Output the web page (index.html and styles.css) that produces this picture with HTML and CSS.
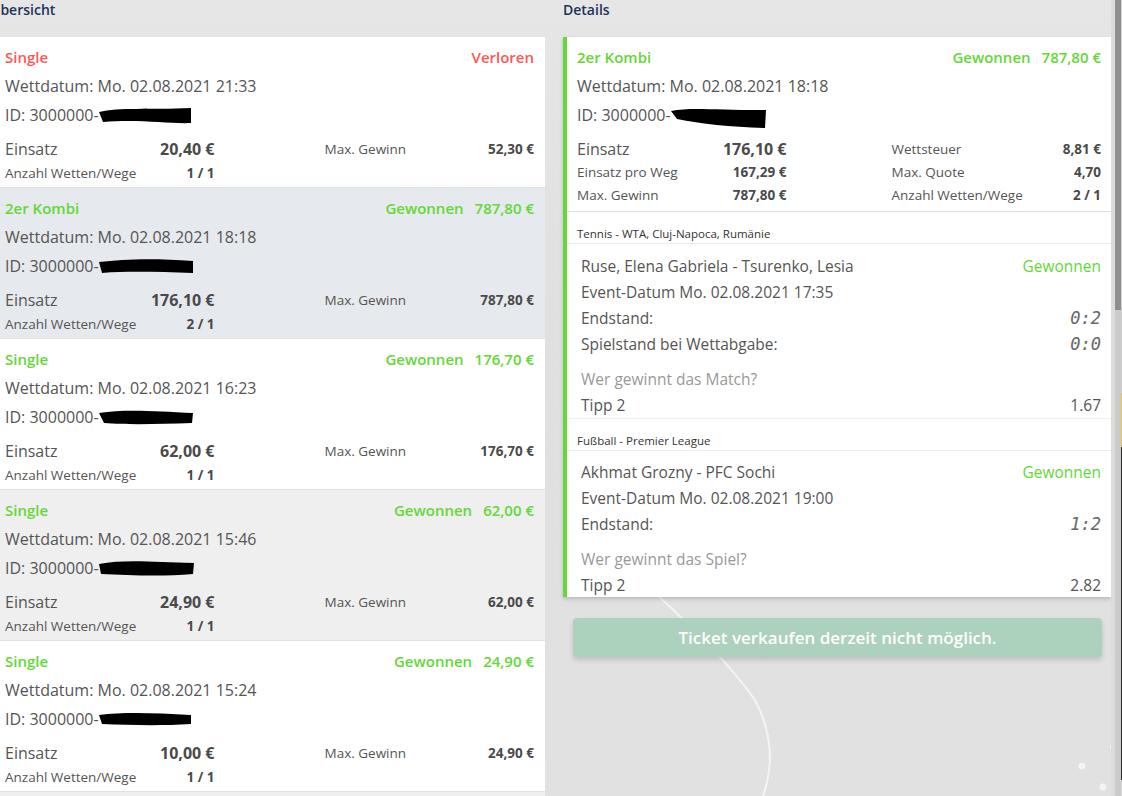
FILE: index.html
```html
<!DOCTYPE html>
<html lang="de">
<head>
<meta charset="utf-8">
<title>Wettübersicht</title>
<link rel="stylesheet" href="styles.css">
</head>
<body>
<div class="page">
  <svg class="deco" width="1122" height="796" viewBox="0 0 1122 796">
    <path d="M 636 576 Q 720 650 755 700 Q 780 748 763 796" fill="none" stroke="#f4f4f4" stroke-width="2"/>
    <circle cx="1082" cy="766" r="3.5" fill="#f4f4f4"/>
    <circle cx="1103" cy="787" r="3.5" fill="#f4f4f4"/>
    <circle cx="1113" cy="747" r="3" fill="#f4f4f4"/>
  </svg>

  <section class="col col-left">
    <h2 class="col-title col-title-left">Übersicht</h2>
    <div class="bet-list">
      <article class="bet">
        <div class="bet-head lost"><span>Single</span><span>Verloren</span></div>
        <div class="bet-line">Wettdatum: Mo. 02.08.2021 21:33</div>
        <div class="bet-line">ID: 3000000-<svg class="redact" width="95" height="20" viewBox="0 0 95 20"><path d="M0 7 C 20 2, 50 5, 92 3 L 92 18 C 70 19, 40 14, 4 17 Z" fill="#000"/></svg></div>
        <div class="stats">
          <div class="stat big"><span>Einsatz</span><b>20,40 €</b></div>
          <div class="stat"><span>Max. Gewinn</span><b>52,30 €</b></div>
          <div class="stat"><span>Anzahl Wetten/Wege</span><b>1 / 1</b></div>
        </div>
      </article>
      <article class="bet bet-selected">
        <div class="bet-head won"><span>2er Kombi</span><span>Gewonnen<span class="amount">787,80 €</span></span></div>
        <div class="bet-line">Wettdatum: Mo. 02.08.2021 18:18</div>
        <div class="bet-line">ID: 3000000-<svg class="redact" width="95" height="20" viewBox="0 0 95 20"><path d="M0 6 C 25 3, 55 2, 94 5 L 94 17 C 60 16, 30 15, 3 17 Z" fill="#000"/></svg></div>
        <div class="stats">
          <div class="stat big"><span>Einsatz</span><b>176,10 €</b></div>
          <div class="stat"><span>Max. Gewinn</span><b>787,80 €</b></div>
          <div class="stat"><span>Anzahl Wetten/Wege</span><b>2 / 1</b></div>
        </div>
      </article>
      <article class="bet">
        <div class="bet-head won"><span>Single</span><span>Gewonnen<span class="amount">176,70 €</span></span></div>
        <div class="bet-line">Wettdatum: Mo. 02.08.2021 16:23</div>
        <div class="bet-line">ID: 3000000-<svg class="redact" width="95" height="20" viewBox="0 0 95 20"><path d="M0 6 C 25 2, 55 4, 94 6 L 93 16 C 60 17, 30 18, 5 16 Z" fill="#000"/></svg></div>
        <div class="stats">
          <div class="stat big"><span>Einsatz</span><b>62,00 €</b></div>
          <div class="stat"><span>Max. Gewinn</span><b>176,70 €</b></div>
          <div class="stat"><span>Anzahl Wetten/Wege</span><b>1 / 1</b></div>
        </div>
      </article>
      <article class="bet bet-hover">
        <div class="bet-head won"><span>Single</span><span>Gewonnen<span class="amount">62,00 €</span></span></div>
        <div class="bet-line">Wettdatum: Mo. 02.08.2021 15:46</div>
        <div class="bet-line">ID: 3000000-<svg class="redact" width="95" height="20" viewBox="0 0 95 20"><path d="M0 6 C 25 1, 55 4, 95 5 L 94 16 C 60 19, 30 17, 2 16 Z" fill="#000"/></svg></div>
        <div class="stats">
          <div class="stat big"><span>Einsatz</span><b>24,90 €</b></div>
          <div class="stat"><span>Max. Gewinn</span><b>62,00 €</b></div>
          <div class="stat"><span>Anzahl Wetten/Wege</span><b>1 / 1</b></div>
        </div>
      </article>
      <article class="bet">
        <div class="bet-head won"><span>Single</span><span>Gewonnen<span class="amount">24,90 €</span></span></div>
        <div class="bet-line">Wettdatum: Mo. 02.08.2021 15:24</div>
        <div class="bet-line">ID: 3000000-<svg class="redact" width="95" height="20" viewBox="0 0 95 20"><path d="M0 6 C 25 3, 55 4, 92 6 L 92 15 C 60 17, 30 16, 3 15 Z" fill="#000"/></svg></div>
        <div class="stats">
          <div class="stat big"><span>Einsatz</span><b>10,00 €</b></div>
          <div class="stat"><span>Max. Gewinn</span><b>24,90 €</b></div>
          <div class="stat"><span>Anzahl Wetten/Wege</span><b>1 / 1</b></div>
        </div>
      </article>
      <article class="bet bet-hover"></article>
    </div>
  </section>

  <section class="col col-right">
    <h2 class="col-title">Details</h2>
    <div class="detail-card">
      <div class="detail-summary">
        <div class="bet-head won"><span>2er Kombi</span><span>Gewonnen<span class="amount">787,80 €</span></span></div>
        <div class="bet-line">Wettdatum: Mo. 02.08.2021 18:18</div>
        <div class="bet-line">ID: 3000000-<svg class="redact redact-tall" width="95" height="24" viewBox="0 0 95 24"><path d="M0 5 C 20 1, 40 4, 95 4 L 94 22 C 60 21, 30 18, 6 13 Z" fill="#000"/></svg></div>
        <div class="stats stats-detail">
          <div class="stat big"><span>Einsatz</span><b>176,10 €</b></div>
          <div class="stat"><span>Wettsteuer</span><b>8,81 €</b></div>
          <div class="stat"><span>Einsatz pro Weg</span><b>167,29 €</b></div>
          <div class="stat"><span>Max. Quote</span><b>4,70</b></div>
          <div class="stat"><span>Max. Gewinn</span><b>787,80 €</b></div>
          <div class="stat"><span>Anzahl Wetten/Wege</span><b>2 / 1</b></div>
        </div>
      </div>

      <div class="league">Tennis - WTA, Cluj-Napoca, Rumänie</div>
      <div class="event">
        <div class="ev-row"><span>Ruse, Elena Gabriela - Tsurenko, Lesia</span><span class="ev-won">Gewonnen</span></div>
        <div class="ev-row"><span>Event-Datum Mo. 02.08.2021 17:35</span></div>
        <div class="ev-row"><span>Endstand:</span><span class="score">0:2</span></div>
        <div class="ev-row"><span>Spielstand bei Wettabgabe:</span><span class="score">0:0</span></div>
        <div class="ev-row ev-question"><span>Wer gewinnt das Match?</span></div>
        <div class="ev-row"><span>Tipp 2</span><span>1.67</span></div>
      </div>

      <div class="league">Fußball - Premier League</div>
      <div class="event event-last">
        <div class="ev-row"><span>Akhmat Grozny - PFC Sochi</span><span class="ev-won">Gewonnen</span></div>
        <div class="ev-row"><span>Event-Datum Mo. 02.08.2021 19:00</span></div>
        <div class="ev-row"><span>Endstand:</span><span class="score">1:2</span></div>
        <div class="ev-row ev-question"><span>Wer gewinnt das Spiel?</span></div>
        <div class="ev-row"><span>Tipp 2</span><span>2.82</span></div>
      </div>
    </div>
    <button class="sell-btn" type="button">Ticket verkaufen derzeit nicht möglich.</button>
  </section>

  <div class="scrollbar">
    <div class="sb-gap"></div>
    <div class="sb-track"><div class="sb-thumb"></div></div>
    <div class="sb-edge"><div class="edge-a"></div><div class="edge-b"></div><div class="edge-c"></div><div class="edge-d"></div></div>
  </div>
</div>
</body>
</html>
```

FILE: styles.css
```css
* { box-sizing: border-box; }

html, body {
  margin: 0;
  padding: 0;
  height: 100%;
  overflow: hidden;
}

body {
  font-family: "Open Sans", "Liberation Sans", sans-serif;
  color: #555;
  background: #e1e1e1;
}

.page {
  position: relative;
  display: flex;
  width: 1122px;
  height: 796px;
  gap: 18px;
  background: linear-gradient(180deg, #e6e6e6 0%, #e0e0e0 40%, #e1e1e1 100%);
}

.deco {
  position: absolute;
  left: 0;
  top: 0;
  pointer-events: none;
}

.col {
  position: relative;
  display: flex;
  flex-direction: column;
}

.col-left {
  width: 545px;
  overflow: hidden;
}

.col-right {
  width: 548px;
}

.col-title {
  margin: 0;
  height: 37px;
  flex-shrink: 0;
  padding-top: 1px;
  font-size: 14px;
  line-height: 18px;
  font-weight: 600;
  color: #1d3358;
}

.col-title-left {
  margin-left: -10px;
}

/* ---------- left list ---------- */
.bet-list {
  display: flex;
  flex-direction: column;
  flex-shrink: 0;
}

.bet {
  background: #fff;
  height: 151px;
  padding: 10px 11px 4px 5px;
  border-bottom: 1px solid #e2e2e2;
  flex-shrink: 0;
}

.bet-selected { background: #e6e9ed; }
.bet-hover { background: #efefef; }

.bet-head {
  display: flex;
  justify-content: space-between;
  font-size: 15px;
  line-height: 20px;
  height: 20px;
  font-weight: 600;
}

.bet-head.lost { color: #ff5656; }
.bet-head.won { color: #63d836; }

.amount { margin-left: 11px; }

.bet-line {
  margin-top: 9px;
  height: 20px;
  font-size: 16px;
  line-height: 20px;
  color: #555;
  white-space: nowrap;
  display: flex;
  align-items: center;
}

.redact {
  margin-left: 0;
  display: block;
  flex-shrink: 0;
}

.redact-tall {
  margin-top: 6px;
}

.stats {
  margin-top: 14px;
  display: grid;
  grid-template-columns: 1fr 1fr;
  column-gap: 110px;
  row-gap: 4px;
}

.stat {
  display: flex;
  justify-content: space-between;
  align-items: center;
  font-size: 13.5px;
  line-height: 20px;
  height: 20px;
  color: #555;
  white-space: nowrap;
}

.stat b {
  font-weight: 700;
  color: #4a4a4a;
}

.stat.big {
  font-size: 16px;
}

/* ---------- detail card ---------- */
.detail-card {
  background: #fff;
  border-left: 4px solid #63d836;
  box-shadow: 0 2px 4px rgba(0,0,0,0.18);
}

.detail-summary {
  padding: 10px 10px 6px 10px;
  border-bottom: 1px solid #dcdcdc;
}

.stats-detail {
  column-gap: 105px;
  row-gap: 3px;
}

.league {
  padding: 14px 10px 1px 10px;
  font-size: 11.5px;
  line-height: 16px;
  color: #333;
  border-bottom: 1px solid #ececec;
}

.event {
  padding: 12px 10px 3px 14px;
  border-bottom: 1px solid #f0f0f0;
}

.event-last {
  padding-top: 11px;
  padding-bottom: 2px;
  border-bottom: 0;
}

.ev-row {
  display: flex;
  justify-content: space-between;
  align-items: center;
  font-size: 15.5px;
  line-height: 20px;
  height: 20px;
  color: #555;
  white-space: nowrap;
}

.ev-row + .ev-row { margin-top: 6px; }
.ev-row.ev-question { margin-top: 15px; color: #999; }

.ev-won { color: #63d836; }

.score {
  font-family: "DejaVu Sans Mono", "Liberation Mono", monospace;
  font-style: italic;
  font-size: 17px;
  color: #666;
}

.sell-btn {
  margin: 21px 9px 0 10px;
  height: 39px;
  border: 0;
  border-radius: 4px;
  background: #acd1bd;
  color: #fff;
  font-family: "Open Sans", "Liberation Sans", sans-serif;
  font-size: 17px;
  font-weight: 600;
  box-shadow: 0 3px 5px rgba(0,0,0,0.15);
}

/* ---------- scrollbar strip ---------- */
.scrollbar {
  position: relative;
  width: 11px;
  margin-left: -18px;
  display: flex;
}

.sb-gap { width: 4px; background: #dcdcdc; }

.sb-track {
  width: 6px;
  background: #cbcbcb;
}

.sb-thumb {
  height: 310px;
  background: #8f8f8f;
}

.sb-edge {
  width: 1px;
  display: flex;
  flex-direction: column;
}

.edge-a { height: 393px; background: #d0d0d0; }
.edge-b { height: 54px; background: #e9c24a; }
.edge-c { height: 333px; background: #2a2a2a; }
.edge-d { flex: 1; background: #d8d8d8; }
```
